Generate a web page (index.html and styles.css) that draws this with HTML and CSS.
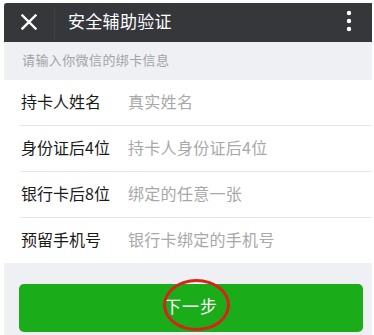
FILE: index.html
```html
<!DOCTYPE html>
<html lang="zh-CN">
<head>
<meta charset="utf-8">
<title>安全辅助验证</title>
<link rel="stylesheet" href="styles.css">
</head>
<body>
<div class="screen">
  <header class="topbar">
    <span class="close">
      <svg width="16" height="16" viewBox="0 0 16 16"><path d="M1.5 1.5 L14.5 14.5 M14.5 1.5 L1.5 14.5" stroke="#fff" stroke-width="2.4" stroke-linecap="square" fill="none"/></svg>
    </span>
    <span class="divider"></span>
    <span class="title">安全辅助验证</span>
    <span class="more">
      <svg width="6" height="22" viewBox="0 0 6 22"><circle cx="3" cy="3" r="2.2" fill="#fff"/><circle cx="3" cy="11" r="2.2" fill="#fff"/><circle cx="3" cy="19" r="2.2" fill="#fff"/></svg>
    </span>
  </header>
  <div class="hint">请输入你微信的绑卡信息</div>
  <div class="form">
    <div class="row"><span class="label">持卡人姓名</span><span class="ph">真实姓名</span></div>
    <div class="row"><span class="label">身份证后4位</span><span class="ph">持卡人身份证后4位</span></div>
    <div class="row"><span class="label">银行卡后8位</span><span class="ph">绑定的任意一张</span></div>
    <div class="row"><span class="label">预留手机号</span><span class="ph">银行卡绑定的手机号</span></div>
  </div>
  <div class="actions">
    <div class="btn"><span class="btn-text">下一步</span><span class="circle"></span></div>
  </div>
</div>
</body>
</html>
```

FILE: styles.css
```css
html, body {
  margin: 0;
  padding: 0;
  background: #ffffff;
  width: 374px;
  height: 335px;
  overflow: hidden;
  font-family: "Noto Sans CJK SC", "Noto Sans", sans-serif;
}
.screen {
  margin: 3px 2px 0 4px;
  background: #eef0f3;
  height: 332px;
  display: flex;
  flex-direction: column;
}
.topbar {
  height: 39px;
  background: #35373b;
  border-top-left-radius: 3px;
  display: flex;
  align-items: center;
  color: #fff;
}
.close {
  width: 16px;
  height: 16px;
  margin-left: 17px;
  display: flex;
  margin-top: -2px;
}
.divider {
  width: 1px;
  height: 32px;
  background: #3f4145;
  margin-left: 17px;
}
.title {
  margin-left: 13px;
  font-size: 17px;
  letter-spacing: 0.3px;
  line-height: 1;
  margin-top: -5px;
}
.more {
  margin-left: auto;
  margin-right: 20px;
  display: flex;
  margin-top: -4px;
}
.hint {
  height: 34px;
  padding-bottom: 4px;
  display: flex;
  align-items: center;
  padding-left: 18px;
  font-size: 13px;
  color: #a3a3a3;
  letter-spacing: 0.4px;
}
.form {
  background: #fff;
  display: flex;
  flex-direction: column;
}
.row {
  height: 41px;
  padding-bottom: 4px;
  display: flex;
  align-items: center;
  margin-left: 16px;
  border-top: 1px solid #e6e6e6;
  font-size: 16px;
}
.row:first-child {
  border-top: none;
}
.label {
  width: 107px;
  padding-left: 1px;
  color: #1a1a1a;
}
.ph {
  color: #a8a8a8;
  letter-spacing: 0.3px;
}
.actions {
  padding: 21px 9px 0 15px;
}
.btn {
  position: relative;
  height: 48px;
  background: #1aad19;
  border-radius: 5px;
  color: #fff;
  font-size: 17px;
  display: flex;
  align-items: center;
  justify-content: center;
  letter-spacing: 1px;
}
.btn-text {
  margin-top: -6px;
}
.circle {
  position: absolute;
  left: 144px;
  top: -5px;
  width: 61px;
  height: 46px;
  border: 3px solid #d8231b;
  border-radius: 50%;
}
```
